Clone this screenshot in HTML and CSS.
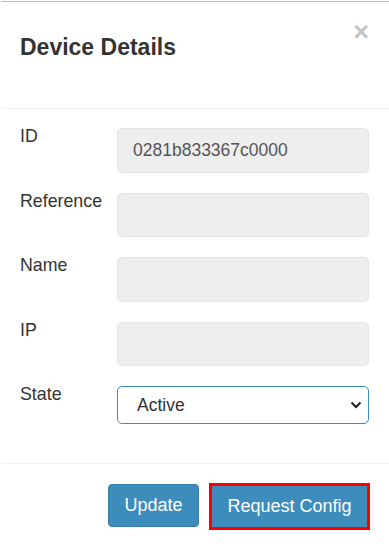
FILE: index.html
```html
<!DOCTYPE html>
<html lang="en">
<head>
<meta charset="utf-8">
<title>Device Details</title>
<link rel="stylesheet" href="styles.css">
</head>
<body>
<div class="modal">
  <div class="modal-header">
    <h4 class="modal-title">Device Details</h4>
    <button class="close" type="button" aria-label="Close">&times;</button>
  </div>
  <div class="modal-body">
    <div class="form-row">
      <label class="form-label">ID</label>
      <input class="form-control" type="text" value="0281b833367c0000" readonly>
    </div>
    <div class="form-row">
      <label class="form-label">Reference</label>
      <input class="form-control" type="text" value="" readonly>
    </div>
    <div class="form-row">
      <label class="form-label">Name</label>
      <input class="form-control" type="text" value="" readonly>
    </div>
    <div class="form-row">
      <label class="form-label">IP</label>
      <input class="form-control" type="text" value="" readonly>
    </div>
    <div class="form-row">
      <label class="form-label">State</label>
      <div class="select-wrap">
        <select class="form-select">
          <option>Active</option>
          <option>Inactive</option>
        </select>
        <svg class="chevron" width="12" height="8" viewBox="0 0 12 8" aria-hidden="true"><path d="M1.5 1.5 L6 6 L10.5 1.5" fill="none" stroke="#222" stroke-width="2"/></svg>
      </div>
    </div>
  </div>
  <div class="modal-footer">
    <button class="btn btn-update" type="button">Update</button>
    <button class="btn btn-request" type="button">Request Config</button>
  </div>
</div>
</body>
</html>
```

FILE: styles.css
```css
* { box-sizing: border-box; }

html, body {
  margin: 0;
  padding: 0;
  background: #ffffff;
}

body {
  font-family: "Liberation Sans", Arial, sans-serif;
  color: #333333;
  padding: 1px 0 0 1px;
}

.modal {
  border-top: 1px solid #bdbdbd;
  background: #ffffff;
}

.modal-header {
  display: flex;
  justify-content: space-between;
  align-items: flex-start;
  padding: 29px 21px 45px 19px;
  border-bottom: 1px solid #f2f2f2;
}

.modal-title {
  margin: 0;
  font-size: 23px;
  line-height: 32px;
  font-weight: bold;
  color: #333333;
}

.close {
  border: 0;
  background: transparent;
  padding: 0;
  margin-top: -15px;
  margin-right: -1px;
  font-family: "Liberation Sans", Arial, sans-serif;
  font-size: 27px;
  line-height: 32px;
  font-weight: bold;
  color: #c4c4c4;
  cursor: pointer;
}

.modal-body {
  display: flex;
  flex-direction: column;
  gap: 20px;
  padding: 19px 20px 39px 19px;
}

.form-row {
  display: grid;
  grid-template-columns: 97px 1fr;
  align-items: start;
}

.form-label {
  font-size: 17.8px;
  line-height: 25px;
  color: #333333;
  margin-top: -4px;
}

.form-control {
  height: 44.5px;
  width: 100%;
  padding: 0 15px;
  border: 1px solid #e3e3e3;
  border-radius: 5px;
  background: #eeeeee;
  font-family: "Liberation Sans", Arial, sans-serif;
  font-size: 17.5px;
  color: #555555;
  outline: none;
}

.select-wrap {
  position: relative;
}

.form-select {
  -webkit-appearance: none;
  appearance: none;
  width: 100%;
  height: 38px;
  padding: 0 19px;
  border: 1px solid #3c8dbc;
  border-radius: 5px;
  background: #ffffff;
  font-family: "Liberation Sans", Arial, sans-serif;
  font-size: 17.5px;
  color: #333333;
  outline: none;
}

.chevron {
  position: absolute;
  right: 7px;
  top: 15px;
  pointer-events: none;
}

.modal-footer {
  display: flex;
  justify-content: flex-end;
  align-items: flex-start;
  gap: 10px;
  padding: 19px 19px 0 0;
  border-top: 1px solid #f2f2f2;
}

.btn {
  font-family: "Liberation Sans", Arial, sans-serif;
  font-size: 18px;
  color: #ffffff;
  background: #3c8dbc;
  border-radius: 4px;
  cursor: pointer;
}

.btn-update {
  height: 43px;
  width: 91px;
  margin-top: 1px;
  border: 1px solid #367fa9;
  padding: 0;
}

.btn-request {
  height: 47px;
  width: 161px;
  border: 3px solid #ff0000;
  border-radius: 0;
  padding: 0;
}
```
